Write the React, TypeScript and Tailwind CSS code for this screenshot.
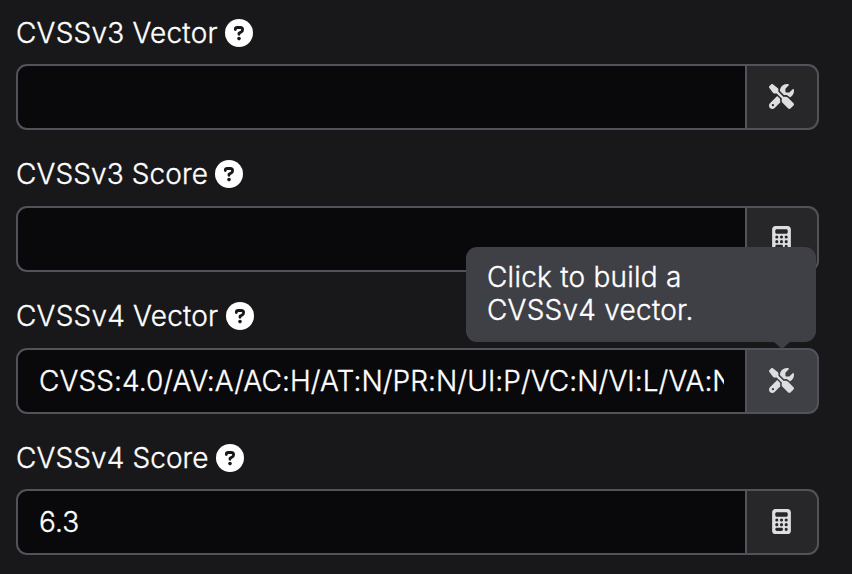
import { FaScrewdriverWrench, FaCalculator } from "react-icons/fa6";

type FieldProps = { label: string; value?: string; kind: "tools" | "calc"; active?: boolean; tip?: string };

function HelpIcon() {
  return (
    <svg viewBox="0 0 28 28" className="size-7 shrink-0" fill="none">
      <circle cx="14" cy="14" r="14" fill="#fff" />
      <path
        d="M10.3 10.6v-.2c0-1.1.9-1.9 2-1.9h3c1.3 0 2.3 1 2.3 2.3 0 .9-.5 1.7-1.3 2.1L14 14.3v1"
        stroke="#18181b"
        strokeWidth="2.8"
        strokeLinecap="round"
        strokeLinejoin="round"
      />
      <circle cx="14" cy="19.6" r="1.8" fill="#18181b" />
    </svg>
  );
}

function Field({ label, value = "", kind, active, tip }: FieldProps) {
  return (
    <div className="h-[141.75px] w-[803px]">
      <div className={`flex h-[34px] items-center leading-[34px] ${kind === "tools" ? "gap-[7.5px] tracking-[0.2px]" : "gap-[7px] tracking-[0.1px]"}`}>
        <span>{label}</span>
        <HelpIcon />
      </div>
      <div className="relative mt-[14.5px] flex h-[66px]">
        <div className="flex min-w-0 flex-1 items-center rounded-l-[11px] border-2 border-[#52525b] bg-[#09090b] px-[21px] tracking-[0.08px]">
          <div className="overflow-hidden whitespace-nowrap">{value}</div>
        </div>
        <div className={`flex w-[72px] items-center justify-center rounded-r-[11px] border-2 border-l-0 border-[#52525b] pb-px pr-px text-[#dedee0] ${active ? "bg-[#3f3f46]" : "bg-[#27272a]"}`}>
          {kind === "tools" ? <FaScrewdriverWrench className="size-[25px]" /> : <FaCalculator className="size-[25px]" />}
        </div>
        {tip && (
          <div className="absolute bottom-[72px] right-[3px] z-10 h-[95px] w-[350px] rounded-[11px] bg-[#3f3f46] px-[21px] pt-[14px] leading-[33px] tracking-[0.23px]">
            {tip}
            <div className="absolute left-[308px] top-[95px] border-x-[8px] border-t-[7px] border-x-transparent border-t-[#3f3f46]" />
          </div>
        )}
      </div>
    </div>
  );
}

export default function App() {
  return (
    <main className="h-[574px] w-[852px] overflow-hidden bg-[#18181b] pl-4 pt-[15.5px] font-[Inter,sans-serif] text-[28px] font-light text-white [-webkit-text-stroke:0.35px_white]">
      <Field label="CVSSv3 Vector" kind="tools" />
      <Field label="CVSSv3 Score" kind="calc" />
      <Field label="CVSSv4 Vector" kind="tools" active value="CVSS:4.0/AV:A/AC:H/AT:N/PR:N/UI:P/VC:N/VI:L/VA:N" tip="Click to build a CVSSv4 vector." />
      <Field label="CVSSv4 Score" kind="calc" value="6.3" />
    </main>
  );
}
